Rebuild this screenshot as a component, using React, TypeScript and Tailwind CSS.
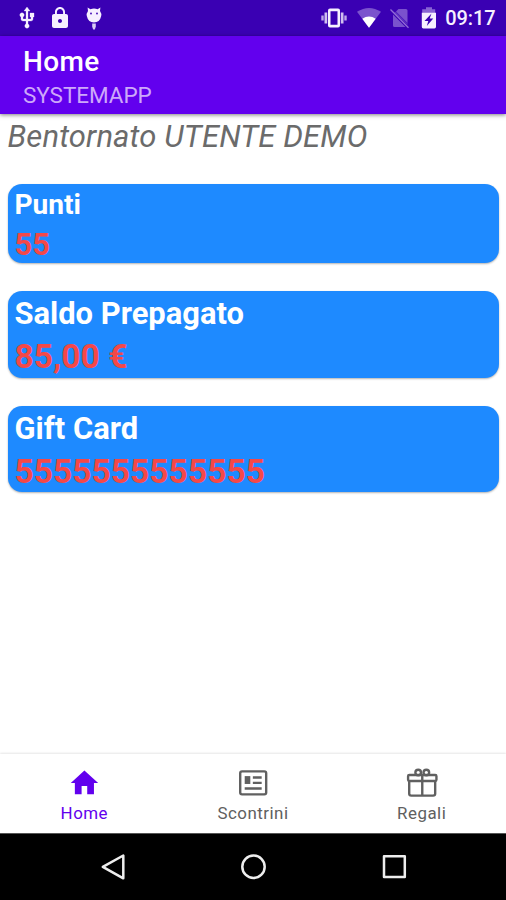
import type { ReactNode } from "react";

function StatusIcon({ width = "w-6", children, viewBox = "0 0 24 24" }: { width?: string; children: ReactNode; viewBox?: string }) {
  return (
    <svg viewBox={viewBox} className={`h-6 shrink-0 ${width}`} fill="#f6f0ff">
      {children}
    </svg>
  );
}

function StatusBar() {
  return (
    <div className="flex h-[35.500px] shrink-0 items-center bg-[#3a00b3] pr-[10.500px] pl-[14.500px]">
      <div className="flex gap-[9.500px]">
        <StatusIcon>
          <path
            stroke="#f6f0ff"
            strokeWidth=".3"
            d="M15 7v4h1v2h-3V5h2l-3-4-3 4h2v8H8v-2.07c.7-.37 1.2-1.08 1.2-1.93 0-1.21-.99-2.2-2.2-2.2-1.21 0-2.2.99-2.2 2.2 0 .85.5 1.56 1.2 1.93V13c0 1.11.89 2 2 2h3v3.05c-.71.37-1.2 1.1-1.2 1.95 0 1.22.99 2.2 2.2 2.2 1.21 0 2.2-.98 2.2-2.2 0-.85-.49-1.58-1.2-1.95V15h3c1.11 0 2-.89 2-2v-2h1V7h-4z"
          />
        </StatusIcon>
        <StatusIcon>
          <path d="M18 8h-1V6c0-2.76-2.24-5-5-5S7 3.240 7 6v2H6c-1.100 0-2 .9-2 2v10c0 1.100.9 2 2 2h12c1.100 0 2-.9 2-2V10c0-1.100-.9-2-2-2zm-6 9c-1.100 0-2-.9-2-2s.9-2 2-2 2 .9 2 2-.9 2-2 2zm3.100-9H8.900V6c0-1.710 1.390-3.100 3.100-3.100s3.100 1.390 3.100 3.100v2z" />
        </StatusIcon>
        <StatusIcon>
          <path d="M5.600 1.600 8.400 3.200Q12 2 15.600 3.200L18.400 1.600 18 5Q19.800 7.500 19.200 10 17.800 16.500 12 16.500T4.800 10Q4.200 7.500 6 5Z" />
          <path d="M10.200 17.500h3.600v3.300L12.800 23.500h-1.600l-1-2.700z" opacity=".85" />
          <circle cx="9" cy="7.500" r=".9" fill="#3a00b3" />
          <circle cx="15" cy="7.500" r=".9" fill="#3a00b3" />
        </StatusIcon>
      </div>
      <div className="ml-auto flex items-center">
        <StatusIcon width="w-[26px]" viewBox="0 0 26 24">
          <path fillRule="evenodd" d="M9 2.500h8q2 0 2 2v15q0 2-2 2H9q-2 0-2-2v-15q0-2 2-2zm.5 2.800v13.400h7V5.300z" />
          <path d="M3.500 6.500h2.700v11H3.500zM19.800 6.500h2.700v11h-2.700z" opacity=".8" />
          <path d="M.3 9.500h2.400v5H.3zM23.300 9.500h2.400v5h-2.400z" opacity=".7" />
        </StatusIcon>
        <div className="ml-[9.500px] flex">
          <StatusIcon>
            <path d="M0 5.800Q12-2 24 5.800L12 21.800z" opacity=".35" />
            <path d="M5.300 12.800Q12 8 18.700 12.800L12 21.800z" fill="#fff" />
          </StatusIcon>
        </div>
        <div className="ml-[8px] flex">
          <StatusIcon>
            <path d="M9.500 3H17q1.500 0 1.500 1.500V17L7 5.500zM4 8.500 16.500 21H5.500Q4 21 4 19.500z" opacity=".34" />
            <path d="M6.800 5.800 18.500 17.500V19L5 6.500z" opacity=".2" />
            <path d="M1.500 3.500 19.500 21.800" stroke="#b89ce6" strokeWidth="1.300" opacity=".7" />
          </StatusIcon>
        </div>
        <div className="ml-[4px] flex">
          <StatusIcon>
            <path d="M9 1.300h6v2h3.200v4H5.200v-4H9z" opacity=".42" />
            <path fillRule="evenodd" d="M4.800 6.800h14.200v14q0 1.600-1.600 1.600h-11q-1.600 0-1.600-1.600zM14.500 7.500l-7 7.500h3.800l-1.500 5 6.500-7.500h-3.600z" />
          </StatusIcon>
        </div>
        <span className="ml-[4.500px] text-[20px] leading-6 font-medium tracking-[-0.1px] text-[#f6f0ff]">09:17</span>
      </div>
    </div>
  );
}

function AppBar() {
  return (
    <header className="z-10 flex h-[78.500px] shrink-0 flex-col bg-[#6200ee] pt-[9.500px] pl-[23px] shadow-[0_1px_4px_rgba(0,0,0,0.5)]">
      <h1 className="text-[28px] leading-[34px] font-medium tracking-[0.4px] text-white">Home</h1>
      <p className="text-[22.500px] leading-[33px] tracking-[-0.05px] text-[#cda8fa]">SYSTEMAPP</p>
    </header>
  );
}

function Card({ title, value, large = false }: { title: string; value: string; large?: boolean }) {
  return (
    <section
      className={`flex flex-col rounded-[14px] bg-[#1e8aff] pt-[2px] pl-[7px] font-bold shadow-[0_1px_2px_rgba(0,0,0,0.3)] ${
        large ? "h-[86.700px]" : "h-[79px]"
      }`}
    >
      <h2 className={`text-white ${large ? "text-[30.900px] leading-[41px]" : "text-[28.100px] leading-[37px]"}`}>{title}</h2>
      <p className={`text-[#f44848] ${large ? "text-[33.600px] leading-[46.500px]" : "text-[30.900px] leading-[43px]"}`}>{value}</p>
    </section>
  );
}

const tabs = [
  {
    label: "Home",
    active: true,
    icon: <path fill="currentColor" d="M10.400 20.200v-6h4v6h4.800v-8h3L12.400 3.200 2.700 12.200h2.900v8z" />,
  },
  {
    label: "Scontrini",
    active: false,
    icon: (
      <>
        <rect x="3" y="3.800" width="18.500" height="16.400" rx="1.300" strokeWidth="1.700" />
        <path d="M6.200 7.200h4v5.600h-4z" fill="currentColor" stroke="none" />
        <path d="M12 8.200h6.300M12 12h6.300M6.200 16h12.100" strokeWidth="1.700" />
      </>
    ),
  },
  {
    label: "Regali",
    active: false,
    icon: (
      <>
        <path d="M3 10.800V19.800q0 1.300 1.500 1.300h15.500q1.500 0 1.500-1.300v-9M12.300 6.500v14.500" strokeWidth="1.700" />
        <rect x="2.200" y="6.400" width="20.200" height="4.300" rx=".9" strokeWidth="1.700" />
        <circle cx="9.400" cy="4.700" r="2" strokeWidth="1.700" />
        <circle cx="15.200" cy="4.700" r="2" strokeWidth="1.700" />
      </>
    ),
  },
];

function BottomTabs() {
  return (
    <nav className="grid h-[79px] shrink-0 grid-cols-3 bg-white shadow-[0_-1px_2px_rgba(0,0,0,0.1)]">
      {tabs.map((tab) => (
        <div key={tab.label} className={`flex flex-col items-center pt-[11.500px] ${tab.active ? "text-[#6200ee]" : "text-[#606060]"}`}>
          <svg viewBox="0 0 24 24" className="h-[33.700px] w-[33.700px] shrink-0" fill="none" stroke={tab.active ? "none" : "currentColor"}>
            {tab.icon}
          </svg>
          <span className="mt-[2.500px] text-[16.900px] leading-[22px] tracking-[0.5px]">{tab.label}</span>
        </div>
      ))}
    </nav>
  );
}

function SystemNav() {
  return (
    <div className="flex h-[67px] shrink-0 items-center justify-center gap-[108.500px] border-t border-[#555] bg-black">
      <svg viewBox="0 0 32 32" className="h-8 w-8" fill="none" stroke="#eee" strokeWidth="2.500" strokeLinejoin="round">
        <path d="M5.800 15.800 26.300 4.500v22.800z" />
      </svg>
      <svg viewBox="0 0 32 32" className="h-8 w-8" fill="none" stroke="#eee" strokeWidth="2.500">
        <circle cx="16.500" cy="15.700" r="11.200" />
      </svg>
      <svg viewBox="0 0 32 32" className="h-8 w-8" fill="none" stroke="#eee" strokeWidth="2.500" strokeLinejoin="round">
        <rect x="6" y="5.200" width="20.800" height="20.800" />
      </svg>
    </div>
  );
}

export default function App() {
  return (
    <div className="flex h-[900px] w-[506px] flex-col overflow-hidden bg-white font-[Roboto,sans-serif]">
      <StatusBar />
      <AppBar />
      <main className="flex flex-1 flex-col px-[7.500px]">
        <p className="pt-[2px] text-[31px] leading-[41px] font-normal tracking-[0.12px] text-[#6b6b6b] italic">Bentornato UTENTE DEMO</p>
        <div className="mt-[26.700px] flex flex-col gap-[28.200px]">
          <Card title="Punti" value="55" />
          <Card title="Saldo Prepagato" value="85,00 €" large />
          <Card title="Gift Card" value="5555555555555" large />
        </div>
      </main>
      <BottomTabs />
      <SystemNav />
    </div>
  );
}
